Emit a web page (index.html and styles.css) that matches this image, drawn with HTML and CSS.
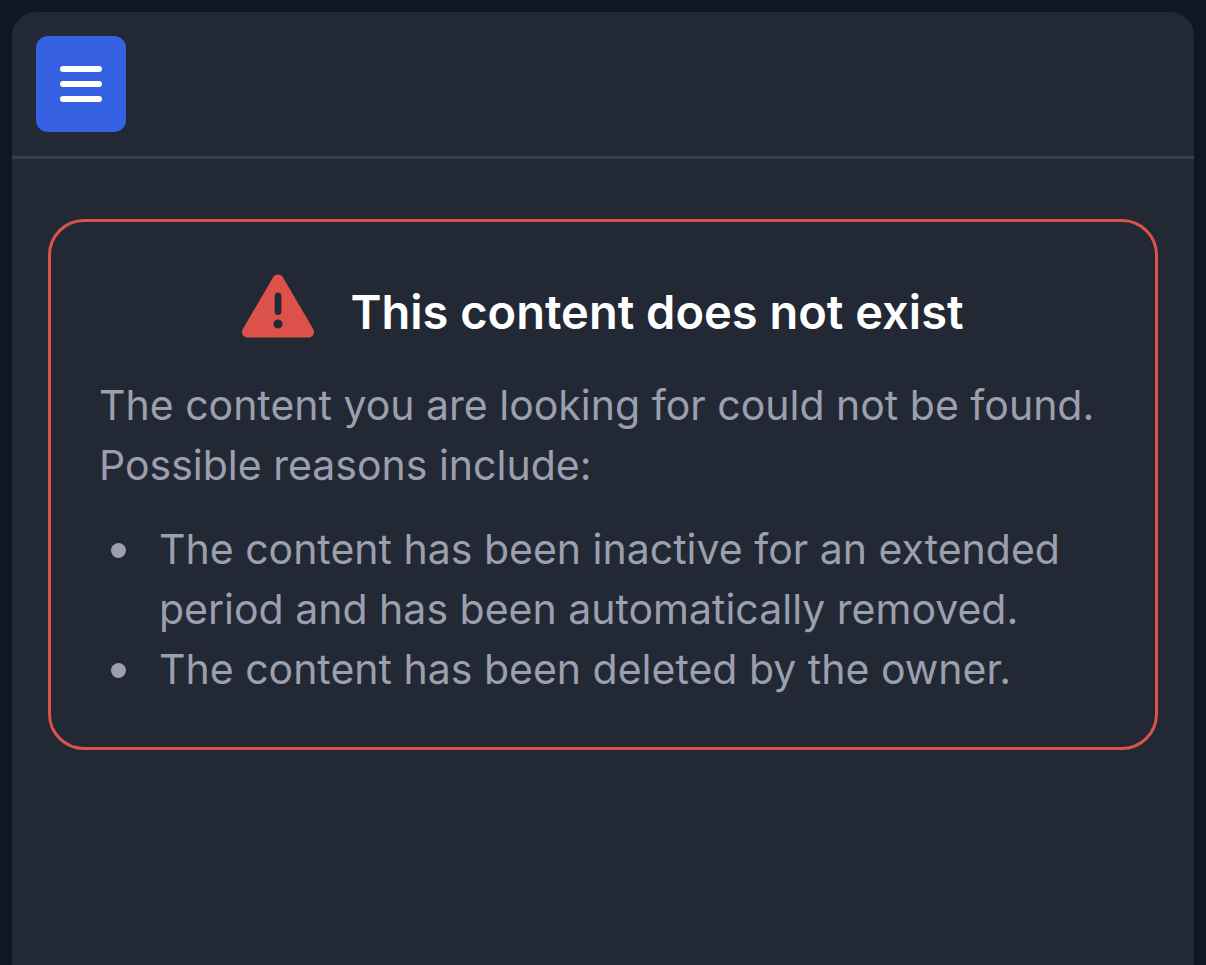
FILE: index.html
```html
<!DOCTYPE html>
<html lang="en">
<head>
<meta charset="utf-8">
<meta name="viewport" content="width=device-width, initial-scale=1">
<title>This content does not exist</title>
<link rel="stylesheet" href="styles.css">
</head>
<body>
<div class="panel">
  <header class="toolbar">
    <button class="menu-button" type="button" aria-label="Open menu">
      <svg class="menu-icon" viewBox="0 0 42 36" aria-hidden="true"><path d="M3 3H39M3 18H39M3 33H39"/></svg>
    </button>
  </header>
  <main class="content">
    <section class="alert">
      <div class="alert-heading">
        <svg class="alert-icon" viewBox="0 0 512 512" aria-hidden="true"><path d="M256 32c14.200 0 27.300 7.500 34.500 19.800l216 368c7.300 12.400 7.300 27.700 .2 40.100S486.300 480 472 480H40c-14.300 0-27.600-7.700-34.700-20.100s-7-27.800 .2-40.100l216-368C228.700 39.500 241.800 32 256 32zm0 128c-13.300 0-24 10.700-24 24V296c0 13.300 10.700 24 24 24s24-10.700 24-24V184c0-13.300-10.700-24-24-24zm32 224a32 32 0 1 0 -64 0 32 32 0 1 0 64 0z"/></svg>
        <h1 class="alert-title">This content does not exist</h1>
      </div>
      <p class="alert-text">The content you are looking for could not be found. Possible reasons include:</p>
      <ul class="reasons">
        <li class="reason">The content has been inactive for an extended period and has been automatically removed.</li>
        <li class="reason">The content has been deleted by the owner.</li>
      </ul>
    </section>
  </main>
</div>
</body>
</html>
```
FILE: styles.css
```css
* { box-sizing: border-box; }
body {
  margin: 0;
  min-height: 100vh;
  display: flex;
  padding: 12px 12px 0;
  background: #111624;
  color: #9c9fae;
  font-family: Inter, "Liberation Sans", sans-serif;
  font-size: 41px;
  line-height: 60px;
}
.panel {
  flex: 1;
  min-width: 0;
  background: #222935;
  border-radius: 24px 24px 0 0;
}
.toolbar {
  display: flex;
  padding: 24px;
  border-bottom: 3px solid #393e4e;
}
.menu-button {
  display: flex;
  padding: 30px 24px;
  border: 0;
  border-radius: 12px;
  background: #3761e3;
  cursor: pointer;
}
.menu-icon {
  width: 42px;
  height: 36px;
  fill: none;
  stroke: #fff;
  stroke-width: 6;
  stroke-linecap: round;
}
.content { padding: 60px 36px; }
.alert {
  padding: 48px;
  border: 3px solid #dc524a;
  border-radius: 36px;
}
.alert-heading {
  display: flex;
  justify-content: center;
  align-items: flex-start;
  gap: 36px;
  margin-bottom: 21px;
}
.alert-icon {
  flex: none;
  width: 72px;
  height: 72px;
  fill: #dc524a;
}
.alert-title {
  margin: 0;
  color: #fff;
  font-size: 47px;
  font-weight: 600;
  line-height: 84px;
}
.alert-text { margin: 0 0 24px; }
.reasons {
  margin: 0;
  padding: 0 0 0 12px;
  list-style: none;
}
.reason {
  display: flex;
  gap: 33px;
}
.reason::before {
  content: "";
  flex: none;
  width: 15px;
  height: 15px;
  margin-top: 24px;
  border-radius: 50%;
  background: currentColor;
}
```
